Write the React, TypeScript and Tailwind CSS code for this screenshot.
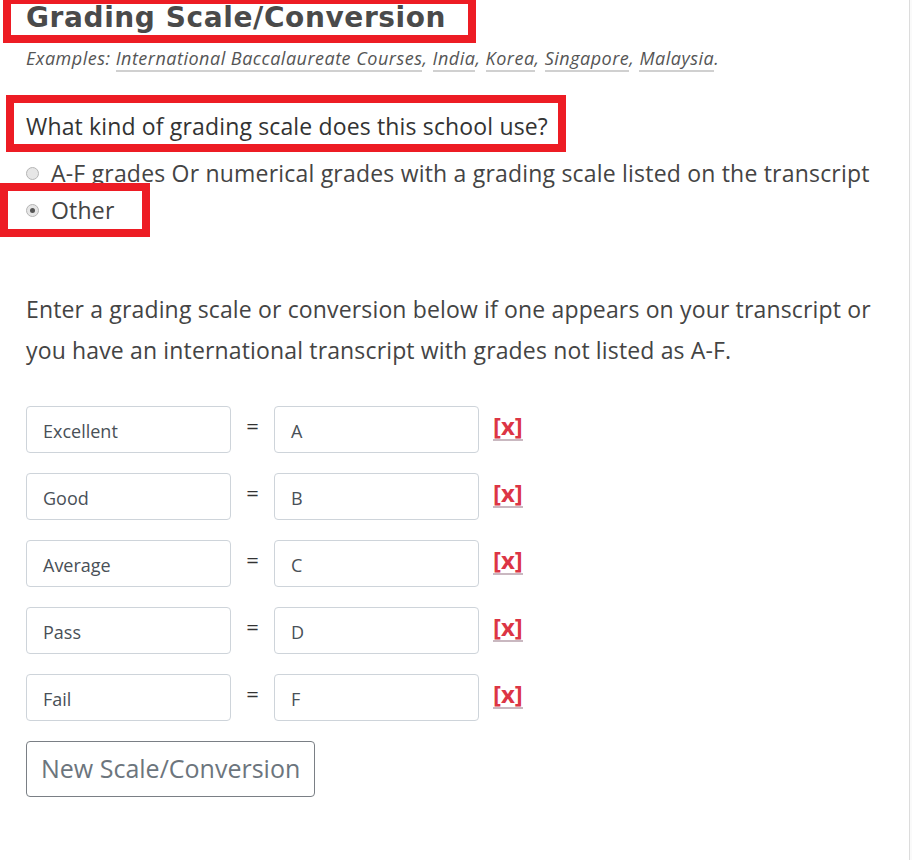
// Grading scale / conversion form, with red annotation boxes drawn over it

const scales = [
  { label: "Excellent", grade: "A" },
  { label: "Good", grade: "B" },
  { label: "Average", grade: "C" },
  { label: "Pass", grade: "D" },
  { label: "Fail", grade: "F" },
];

const examples = [
  "International Baccalaureate Courses",
  "India",
  "Korea",
  "Singapore",
  "Malaysia",
];

function Radio({ checked }: { checked?: boolean }) {
  return (
    <span className="inline-flex items-center justify-center w-[13px] h-[13px] rounded-full border border-[#b5b5b5] bg-[#e6e6e6] mr-[12px] shrink-0">
      {checked && <span className="w-[5px] h-[5px] rounded-full bg-[#555]" />}
    </span>
  );
}

export default function App() {
  return (
    <div className="flex min-h-screen bg-[#fafafa] font-['Open_Sans',sans-serif]">
      <main className="w-[910px] min-h-[860px] bg-white border-r border-[#dcdcdc] pl-[26px]">
        {/* タイトル */}
        <div className="relative pt-[1px]">
          <h2 className="font-['DejaVu_Sans',sans-serif] text-[28px] leading-[34px] font-bold text-[#4a4a4a] tracking-[0.6px]">
            Grading Scale/Conversion
          </h2>
          <div className="absolute left-[-23px] top-[-4px] w-[473px] h-[47px] border-[8px] border-[#ed1c24] pointer-events-none" />
        </div>

        <p className="mt-[11px] text-[18px] leading-[24px] italic text-[#555] tracking-[0.5px]">
          Examples:{" "}
          {examples.map((ex, i) => (
            <span key={ex}>
              <span className="border-b-2 border-[#d0d0d0]">{ex}</span>
              {i < examples.length - 1 ? ", " : "."}
            </span>
          ))}
        </p>

        {/* 質問 */}
        <div className="relative mt-[41px]">
          <p className="text-[23px] leading-[30px] text-[#333] tracking-[0.15px]">
            What kind of grading scale does this school use?
          </p>
          <div className="absolute left-[-20px] top-[-16px] w-[560px] h-[57px] border-[8px] border-[#ed1c24] pointer-events-none" />
        </div>

        <div className="mt-[14px] text-[23px] leading-[37px] text-[#444] tracking-[0.2px]">
          <label className="flex items-center">
            <Radio />
            A-F grades Or numerical grades with a grading scale listed on the transcript
          </label>
          <div className="relative">
            <label className="flex items-center">
              <Radio checked />
              Other
            </label>
            <div className="absolute left-[-26px] top-[-9px] w-[150px] h-[54px] border-[8px] border-[#ed1c24] pointer-events-none" />
          </div>
        </div>

        <p className="mt-[60px] text-[23px] leading-[41px] text-[#444] tracking-[0.15px] pr-[10px]">
          Enter a grading scale or conversion below if one appears on your transcript or you have an
          international transcript with grades not listed as A-F.
        </p>

        {/* 換算表 */}
        <div className="mt-[35px] flex flex-col gap-[20px] items-start">
          {scales.map((s) => (
            <div key={s.label} className="flex items-center">
              <div className="w-[205px] h-[47px] border border-[#ced4da] rounded-[4px] flex items-center pl-[16px] pt-[4px] text-[18px] text-[#495057]">
                {s.label}
              </div>
              <span className="w-[43px] text-center text-[22px] text-[#333] mb-[8px]">=</span>
              <div className="w-[205px] h-[47px] border border-[#ced4da] rounded-[4px] flex items-center pl-[16px] pt-[4px] text-[18px] text-[#495057]">
                {s.grade}
              </div>
              <a className="ml-[14px] mb-[6px] text-[24px] leading-[26px] font-bold text-[#dc3545] border-b-2 border-[#c9b8c0]">
                [x]
              </a>
            </div>
          ))}
          <button className="h-[56px] px-[14px] border-[1.5px] border-[#7a7f85] rounded-[4px] text-[25px] text-[#6c757d]">
            New Scale/Conversion
          </button>
        </div>
      </main>
    </div>
  );
}
